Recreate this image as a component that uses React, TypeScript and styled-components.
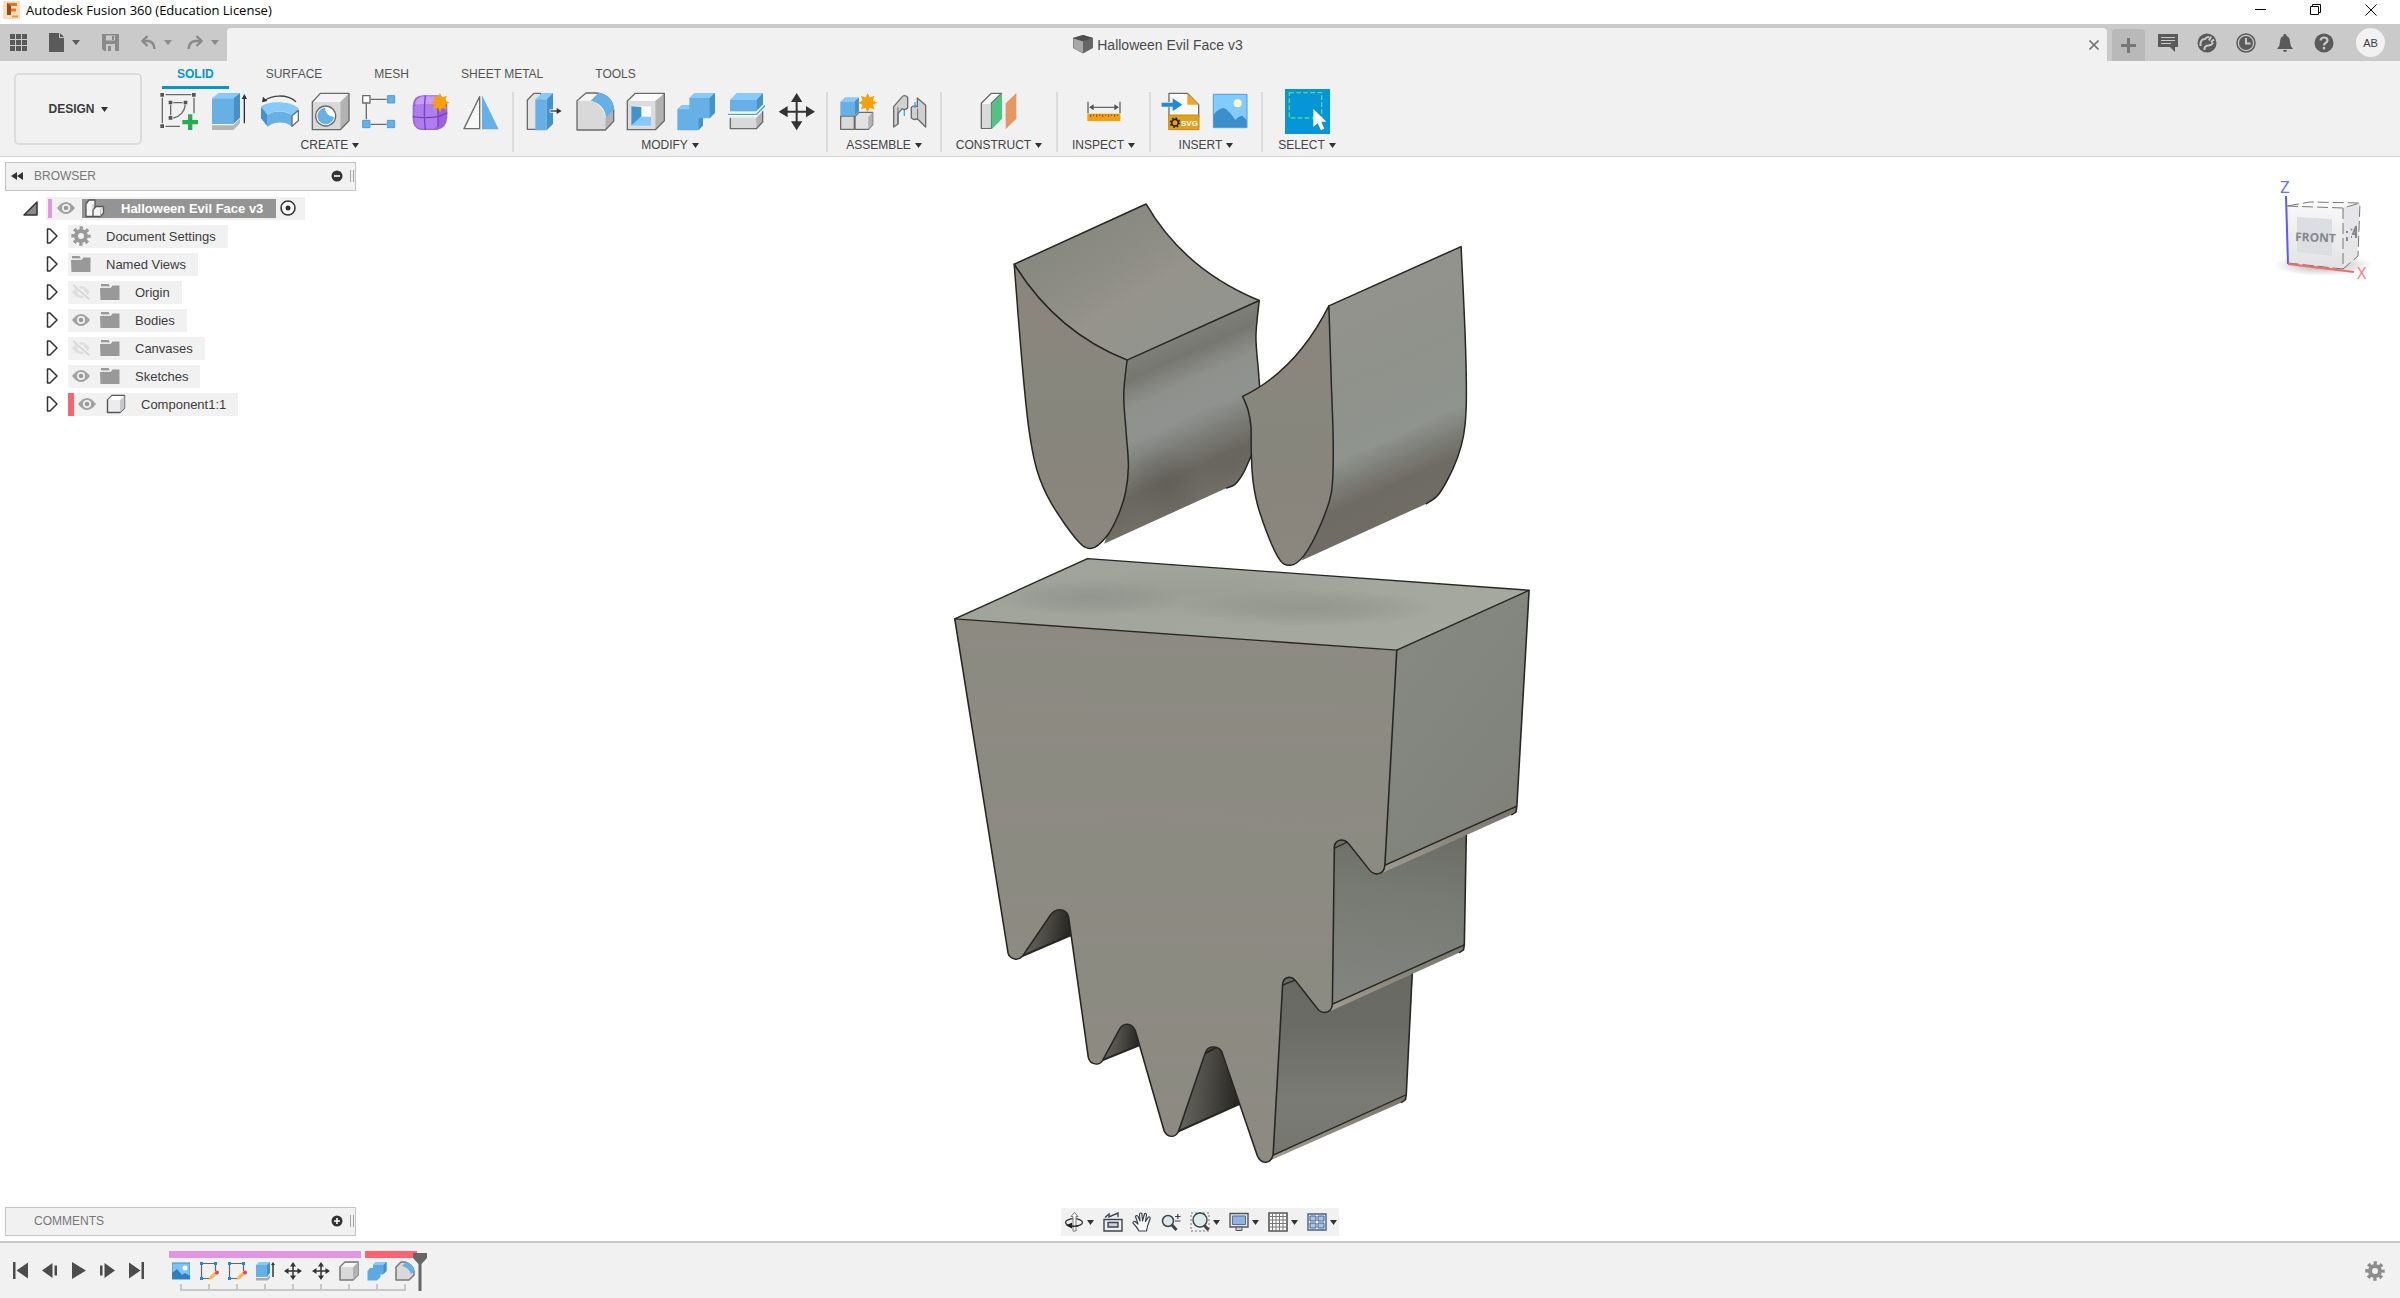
import React from 'react';
import styled, { createGlobalStyle } from 'styled-components';

const Global = createGlobalStyle`
  *, *::before, *::after { box-sizing: border-box; }
  html, body { margin: 0; padding: 0; background: #fff; }
  body, button { font-family: "Liberation Sans", Arial, Helvetica, sans-serif; font-size: 12px; color: #3c3c3c; }
  button { margin: 0; padding: 0; border: 0; background: none; cursor: pointer; }
  svg { display: block; flex: none; }
`;

const Shell = styled.div`
  display: flex;
  flex-direction: column;
  min-height: 100vh;
`;

/* ---------- title bar ---------- */
const TitleBar = styled.header`
  display: flex;
  align-items: center;
  height: 24px;
  padding: 0 2px 4px 3px;
  gap: 6px;
  background: #fff;
`;
const AppTitle = styled.h1`
  flex: 1;
  margin: 0;
  font: 400 13px/20px "Open Sans", "Noto Sans", sans-serif;
  color: #000;
`;
const WindowControls = styled.div`
  display: flex;
`;
const WindowButton = styled.button`
  display: grid;
  place-items: center;
  width: 55px;
  height: 20px;
`;

/* ---------- document strip ---------- */
const Strip = styled.div`
  display: flex;
  align-items: stretch;
  height: 37px;
  background: #cacaca;
`;
const QuickAccess = styled.div`
  display: flex;
  align-items: center;
  gap: 22px;
  padding: 0 8px 0 10px;
`;
const SplitButton = styled.button`
  display: flex;
  align-items: center;
  gap: 8px;
`;
const History = styled.div`
  display: flex;
  gap: 15px;
`;
const DocTab = styled.div`
  flex: 1;
  display: flex;
  align-items: center;
  margin-top: 4px;
  padding-right: 8px;
  border-radius: 4px 4px 0 0;
  background: #f1f1f1;
`;
const DocTitle = styled.div`
  flex: 1;
  display: flex;
  align-items: center;
  justify-content: center;
  gap: 4px;
  font-size: 14px;
  color: #4a4a4a;
`;
const NewTab = styled.button`
  display: grid;
  place-items: center;
  width: 33px;
  margin: 5px 13px 0 5px;
  border-radius: 4px 4px 0 0;
  background: #b9b9b9;
`;
const Utilities = styled.div`
  display: flex;
  align-items: center;
  gap: 19px;
  padding-right: 15px;
`;
const Avatar = styled.button`
  width: 29px;
  height: 29px;
  margin-left: 3px;
  border-radius: 50%;
  background: #f1f1f1;
  font-size: 11px;
`;

/* ---------- ribbon ---------- */
const Ribbon = styled.div`
  display: flex;
  height: 96px;
  background: #f1f1f1;
  border-bottom: 1px solid #d6d6d6;
`;
const Workspace = styled.button`
  display: flex;
  align-items: center;
  justify-content: center;
  gap: 6px;
  width: 128px;
  height: 72px;
  margin: 12px 6px 0 14px;
  border: 2px solid #dcdcdc;
  border-radius: 5px;
  font-weight: 700;
`;
const RibbonMain = styled.div`
  flex: 1;
`;
const Tabs = styled.nav`
  display: flex;
  gap: 22px;
  height: 28px;
  padding-left: 14px;
`;
const Tab = styled.button<{ $active?: boolean }>`
  padding: 0 15px;
  border-bottom: 3px solid ${(p) => (p.$active ? '#0696d7' : 'transparent')};
  color: ${(p) => (p.$active ? '#0696d7' : '#555')};
  font-weight: ${(p) => (p.$active ? 700 : 400)};
`;
const Groups = styled.div`
  display: flex;
`;
const Group = styled.section<{ $pad?: number; $width?: number }>`
  width: ${(p) => (p.$width ? `${p.$width}px` : 'auto')};
  padding: 0 ${(p) => p.$pad ?? 0}px;
`;
const Tools = styled.div`
  display: flex;
  justify-content: center;
`;
const Tool = styled.button`
  display: grid;
  place-items: center;
  width: 50px;
  height: 45px;
`;
const GroupLabel = styled.button`
  display: flex;
  align-items: center;
  justify-content: center;
  gap: 4px;
  width: 100%;
  height: 22px;
  color: #444;
`;
const Separator = styled.span`
  width: 2px;
  margin: 3px 0 4px;
  background: #dcdcdc;
`;

/* ---------- viewport ---------- */
const Viewport = styled.main`
  flex: 1;
  display: grid;
  grid-template-columns: 1fr auto 1fr;
  min-height: 0;
  background: #fff;
`;
const LeftColumn = styled.div`
  display: flex;
  flex-direction: column;
  justify-content: space-between;
  align-items: flex-start;
  padding: 5px 0 5px 5px;
`;
const Panel = styled.div`
  display: flex;
  align-items: center;
  width: 351px;
  height: 29px;
  padding: 0 1px 1px 5px;
  border: 1px solid #c4c4c4;
  background: #f1f1f1;
  color: #777;
`;
const PanelTitle = styled.h2`
  flex: 1;
  margin: 0 0 0 11px;
  font-size: 12px;
  font-weight: 400;
`;
const Grip = styled.span`
  width: 4px;
  height: 12px;
  margin-left: 7px;
  border: solid #a4a4a4;
  border-width: 0 1px;
`;
const Tree = styled.ul`
  margin: 3px 0 0;
  padding: 0;
  list-style: none;
`;
const Node = styled.li<{ $root?: boolean }>`
  display: flex;
  align-items: center;
  gap: ${(p) => (p.$root ? 8 : 9)}px;
  height: 28px;
  padding-left: ${(p) => (p.$root ? 18 : 41)}px;
`;
const Chip = styled.div<{ $bar?: boolean }>`
  display: flex;
  align-items: center;
  gap: 9px;
  height: 23px;
  padding: 0 12px 0 3px;
  border-left: ${(p) => (p.$bar ? '6px solid #ff6371' : '0')};
  background: #f1f1f1;
  font-size: 13px;
`;
const NodeName = styled.span`
  padding-left: 6px;
`;
const RootChip = styled.div`
  display: flex;
  align-items: center;
  gap: 4px;
  height: 23px;
  padding: 0 9px 0 2px;
  background: #f1f1f1;
`;
const RootBar = styled.span`
  width: 4px;
  height: 19px;
  background: #e394e3;
`;
const RootName = styled.button`
  display: flex;
  align-items: center;
  gap: 16px;
  height: 19px;
  margin-left: 2px;
  padding: 0 13px 0 3px;
  background: #949494;
  color: #fff;
  font-size: 13px;
  font-weight: 700;
`;
const Centre = styled.div`
  display: flex;
  flex-direction: column;
  align-items: center;
  padding-bottom: 5px;
`;
const Model = styled.svg`
  flex: 1 1 0;
  min-height: 0;
  width: 700px;
`;
const NavBar = styled.div`
  display: flex;
  align-items: center;
  gap: 9px;
  height: 28px;
  padding: 0 2px 0 3px;
  background: #f1f1f1;
`;
const NavButton = styled.button`
  display: flex;
  align-items: center;
  gap: 3px;
`;
const RightColumn = styled.div`
  display: flex;
  justify-content: flex-end;
  padding: 19px 26px 0 0;
`;

/* ---------- timeline ---------- */
const TimelineBar = styled.footer`
  display: flex;
  align-items: flex-start;
  height: 57px;
  border-top: 2px solid #c8c8c8;
  background: #f1f1f1;
`;
const Playback = styled.div`
  display: flex;
  align-self: center;
  padding: 0 16px 0 6px;
`;
const PlayButton = styled.button`
  display: grid;
  place-items: center;
  width: 29px;
  height: 28px;
`;
const Track = styled.div`
  position: relative;
  display: grid;
  grid-template-columns: repeat(9, 28px);
  row-gap: 3px;
  padding-top: 8px;
`;
const Span = styled.span<{ $cols: number; $color: string }>`
  grid-column: span ${(p) => p.$cols};
  height: 7px;
  margin: 0 2px;
  background: ${(p) => p.$color};
`;
const Step = styled.button`
  display: grid;
  place-items: center;
  height: 20px;
`;
const Rail = styled.div`
  grid-column: 1 / -1;
  display: flex;
  margin: 0 13px;
  border-right: 2px solid #c8c8c8;
`;
const RailSegment = styled.span`
  width: 28px;
  height: 7px;
  border: solid #c8c8c8;
  border-width: 0 0 2px 2px;
`;
const Marker = styled.svg`
  position: absolute;
  right: -8px;
  top: 10px;
`;
const SettingsButton = styled.button`
  margin: 0 15px 0 auto;
  align-self: center;
`;

/* ---------- icons ---------- */
const Caret = ({ color = '#333', w = 7 }: { color?: string; w?: number }) => (
  <svg width={w} height="5" viewBox="0 0 7 5" preserveAspectRatio="none"><path d="M0 0h7L3.5 5z" fill={color} /></svg>
);

type Art = { box: string; w?: number; h?: number; children: React.ReactNode };
const Ico = ({ box, w = 40, h = 39, children }: Art) => (
  <svg width={w} height={h} viewBox={box} strokeLinejoin="round" aria-hidden="true">{children}</svg>
);

const G = '#6b6b6b';
const star = (cx: number, cy: number, r: number, inner = 0.58) =>
  Array.from({ length: 16 }, (_, i) => {
    const a = (i * Math.PI) / 8 - Math.PI / 2;
    const k = i % 2 ? r * inner : r;
    return `${(cx + Math.cos(a) * k).toFixed(1)},${(cy + Math.sin(a) * k).toFixed(1)}`;
  }).join(' ');

const createTools: [string, React.ReactNode][] = [
  ['Create Sketch', <Ico box="480 276 120 117">
    <path d="M497 284H574M487 293V370M582 293V340M496 379H540" stroke={G} strokeWidth="4" fill="none" />
    <path d="M512 314V346M520 308H548M556 314C554 334 540 350 520 354" stroke={G} strokeWidth="4" fill="none" />
    <path d="M481 279h11v11h-11zM576 279h11v11h-11zM481 373h11v11h-11zM506 302h11v11h-11zM551 302h11v11h-11zM506 348h11v11h-11z" fill="#555" />
    <path d="M564 343h13v17h17v13h-17v17h-13v-17h-17v-13h17z" fill="#25ae50" />
  </Ico>],
  ['Extrude', <Ico box="630 276 120 117">
    <path d="M636 376h64l20-20v14l-20 20h-64z" fill="#b4b4b4" />
    <path d="M636 295L656 279H720L700 295z" fill="#86c9fa" />
    <path d="M636 295H700V372H636z" fill="#67b0e6" />
    <path d="M700 295L720 279V353L700 372z" fill="#4492cb" />
    <path d="M733 370V290" stroke="#333" strokeWidth="4" /><path d="M725 297L733 282L741 297z" fill="#333" />
  </Ico>],
  ['Revolve', <Ico box="780 276 120 117">
    <path d="M793 302C815 285 860 281 888 305" stroke="#444" strokeWidth="4" fill="none" />
    <path d="M786 307L789 290L802 303z" fill="#333" />
    <path d="M783 320C800 302 872 300 897 326L876 347C860 330 820 330 803 345z" fill="#86c9fa" />
    <path d="M783 320L803 345V380L783 355z" fill="#4492cb" />
    <path d="M803 345C822 331 858 331 876 347V380C860 363 822 363 803 380z" fill="#67b0e6" />
    <path d="M876 347L895 331V362L876 379z" fill="#fff" stroke={G} strokeWidth="4" />
  </Ico>],
  ['Hole', <Ico box="930 276 120 117">
    <path d="M937 306L961 280H1047L1021 306z" fill="#f4f4f4" />
    <path d="M937 306H1021V389H937z" fill="#d9d9d9" />
    <path d="M1021 306L1047 280V362L1021 389z" fill="#b2b2b2" />
    <path d="M937 306L961 280H1047V362L1021 389H937z" fill="none" stroke={G} strokeWidth="4" />
    <circle cx="977" cy="348" r="30" fill="#fff" stroke={G} strokeWidth="4" />
    <path d="M975 323A25 25 0 1 0 1002 351A28 28 0 0 1 975 323z" fill="#67b0e6" />
  </Ico>],
  ['Rectangular Pattern', <Ico box="1080 276 120 117">
    <path d="M1112 298H1160M1099 310V358M1112 373H1160" stroke={G} strokeWidth="4" />
    <path d="M1088 287h22v22h-22z" fill="#fff" stroke={G} strokeWidth="4" />
    <path d="M1162 287h22v22h-22zM1162 361h22v22h-22zM1088 361h22v22h-22z" fill="#67b0e6" stroke="#4f9fd8" strokeWidth="3" />
  </Ico>],
  ['Create Form', <Ico box="1230 276 120 117">
    <path d="M1238 318Q1240 286 1270 286H1315Q1342 295 1342 320V352Q1340 384 1312 390H1262Q1238 384 1238 356z" fill="#9a63d8" />
    <path d="M1246 306Q1254 289 1272 289H1326L1308 314H1246z" fill="#c79bff" />
    <path d="M1243 320Q1250 312 1262 312H1302Q1314 314 1314 326V370Q1312 385 1298 386H1264Q1243 382 1243 356z" fill="#ae7eec" />
    <path d="M1276 286Q1270 340 1276 390M1238 350Q1275 356 1315 350L1342 338M1314 320V380" stroke="#7c3fc0" strokeWidth="4" fill="none" />
    <polygon points={star(1320, 308, 29)} fill="#f9a006" />
  </Ico>],
  ['Mirror', <Ico box="1380 276 120 117">
    <path d="M1439 290V386H1392z" fill="#f7f7f7" stroke={G} strokeWidth="4" />
    <path d="M1446 286L1496 388H1446z" fill="#67b0e6" />
  </Ico>],
];

const modifyTools: [string, React.ReactNode][] = [
  ['Press Pull', <Ico box="75 126 120 117">
    <path d="M82 150L102 130H122V238H82z" fill="#e4e4e4" stroke={G} strokeWidth="4" />
    <path d="M106 148L126 129H159L140 148z" fill="#86c9fa" /><path d="M106 148H140V241H106z" fill="#67b0e6" />
    <path d="M140 148L159 129V222L140 241z" fill="#4492cb" />
    <path d="M149 178h20v10h-20z" fill="#f8f8f8" /><path d="M151 183H172" stroke="#333" strokeWidth="4" /><path d="M170 174L185 183L170 192z" fill="#333" />
  </Ico>],
  ['Fillet', <Ico box="225 126 120 117">
    <path d="M231 152L258 129H290L270 152z" fill="#f6f6f6" />
    <path d="M231 152H262Q306 156 316 203V240H231z" fill="#d9d9d9" /><path d="M316 205L341 178V214L316 240z" fill="#b2b2b2" />
    <path d="M231 152L258 129H290Q336 136 341 180V214L316 240H231z" fill="none" stroke={G} strokeWidth="4" />
    <path d="M272 152L296 128Q338 136 343 178L318 203Q314 162 272 152z" fill="#67b0e6" />
  </Ico>],
  ['Shell', <Ico box="375 126 120 117">
    <path d="M382 153L406 130H493L466 153z" fill="#fafafa" /><path d="M382 153H466V239H382z" fill="#dcdcdc" />
    <path d="M466 153L493 130V212L466 239z" fill="#b2b2b2" />
    <path d="M382 153L406 130H493V212L466 239H382z" fill="none" stroke={G} strokeWidth="4" />
    <path d="M394 169H453V227H394z" fill="#fafafa" /><path d="M394 169L424 171V200L394 227z" fill="#4492cb" />
    <path d="M394 227L422 200H453V227z" fill="#86c9fa" />
  </Ico>],
  ['Combine', <Ico box="525 126 120 117">
    <path d="M532 178L546 165H568V144L584 129H645V188L629 205H609V226L594 241H532z" fill="#67b0e6" />
    <path d="M568 144L584 129H645L629 144zM532 178L546 165H568V178z" fill="#86c9fa" />
    <path d="M629 144L645 129V188L629 205zM609 205H596V241L609 226z" fill="#4492cb" />
  </Ico>],
  ['Split Body', <Ico box="675 126 120 117">
    <path d="M690 150L710 129H789L769 150z" fill="#86c9fa" /><path d="M690 150H769V184H690z" fill="#67b0e6" /><path d="M769 150L789 129V163L769 184z" fill="#4492cb" />
    <path d="M691 203H769V236H691z" fill="#d9d9d9" /><path d="M769 203L788 184V216L769 236z" fill="#b2b2b2" />
    <path d="M691 203V236H769L788 216V184" stroke={G} strokeWidth="4" fill="none" />
    <path d="M684 193H770L796 166" stroke="#fff" strokeWidth="9" fill="none" /><path d="M684 193H770L796 166" stroke="#3fa3ea" strokeWidth="4" fill="none" />
  </Ico>],
  ['Move', <Ico box="825 126 120 117">
    <path d="M858 185H922M890 152V218" stroke="#333" strokeWidth="6" />
    <path d="M836 185l27-17v34zM945 185l-27-17v34zM890 129l17 27h-34zM890 241l17-27h-34z" fill="#333" />
  </Ico>],
];

const assembleTools: [string, React.ReactNode][] = [
  ['New Component', <Ico box="1020 126 120 117">
    <path d="M1025 198H1066V238H1025z" fill="#d9d9d9" stroke={G} strokeWidth="4" />
    <path d="M1068 200L1080 187H1121V224L1108 238H1068z" fill="#e2e2e2" stroke={G} strokeWidth="4" /><path d="M1108 200L1121 187V224L1108 238z" fill="#b2b2b2" />
    <path d="M1024 155L1038 142H1080L1066 155z" fill="#86c9fa" /><path d="M1024 155H1066V197H1024z" fill="#67b0e6" /><path d="M1066 155L1080 142V184L1066 197z" fill="#4492cb" />
    <polygon points={star(1106, 158, 29)} fill="#f9a006" />
  </Ico>],
  ['Joint', <Ico box="1170 126 120 117">
    <path d="M1184 170L1208 142Q1216 132 1226 142V174Q1218 182 1210 176L1197 190V222L1184 231z" fill="#d0d0d0" stroke={G} strokeWidth="4" />
    <path d="M1280 166L1255 144V170Q1244 164 1237 172V204Q1246 212 1255 206L1280 231z" fill="#d0d0d0" stroke={G} strokeWidth="4" />
    <path d="M1216 180V198M1248 156V174" stroke="#3fa3ea" strokeWidth="4" /><path d="M1197 172V222M1256 176V206" stroke={G} strokeWidth="3" />
  </Ico>],
];

const constructTools: [string, React.ReactNode][] = [
  ['Offset Plane', <Ico box="180 216 120 117">
    <path d="M187 250L217 220H248L217 250V325H187z" fill="#fafafa" stroke={G} strokeWidth="4" /><path d="M189 252H214V323H189z" fill="#d9d9d9" />
    <path d="M218 252L249 220V296L218 328z" fill="#53c184" /><path d="M260 250L292 219V296L260 328z" fill="#e59866" />
  </Ico>],
];
const inspectTools: [string, React.ReactNode][] = [
  ['Measure', <Ico box="492 216 120 117">
    <path d="M504 245V280M600 245V280M512 262H592" stroke="#666" strokeWidth="4" /><path d="M507 262l14-9v18zM597 262l-14-9v18z" fill="#555" />
    <path d="M502 281H601V303H502z" fill="#f9a006" /><path d="M512 283v8M521 283v5M530 283v8M539 283v5M548 283v8M557 283v5M566 283v8M575 283v5M584 283v8M593 283v5" stroke="#7a5200" strokeWidth="3" />
  </Ico>],
];
const insertTools: [string, React.ReactNode][] = [
  ['Insert SVG', <Ico box="729 216 120 117">
    <path d="M753 246V220H808L842 254V290H753V262" fill="#fbfbfb" stroke={G} strokeWidth="4" />
    <path d="M808 220V254H843z" fill="#f3a623" />
    <path d="M731 248h33v-13l29 19l-29 19v-13h-33z" fill="#1d8ae0" />
    <path d="M752 285H843V329H752z" fill="#e2a11d" stroke="#c98a10" strokeWidth="3" />
    <circle cx="771" cy="308" r="10" fill="none" stroke="#222" strokeWidth="5" /><circle cx="771" cy="308" r="14" fill="none" stroke="#222" strokeWidth="4" strokeDasharray="5 6" />
    <text x="789" y="317" fontSize="24" fontWeight="700" fontFamily="Liberation Sans, sans-serif" fill="#fff">SVG</text>
  </Ico>],
  ['Canvas', <Ico box="879 216 120 117">
    <path d="M886 223H987V323H886z" fill="#82cbff" stroke="#4f9fd8" strokeWidth="3" /><circle cx="959" cy="250" r="12" fill="#fdf9c8" />
    <path d="M887 284Q902 264 918 264Q932 270 952 300Q964 286 974 288L986 300V322H887z" fill="#3d8fcb" />
  </Ico>],
];
const selectTools: [string, React.ReactNode][] = [
  ['Select', <Ico box="1095 208 135 135" w={45} h={45}>
    <path d="M1095 208H1230V343H1095z" fill="#0696d7" />
    <path d="M1108 219H1205V295H1108z" fill="none" stroke="#52d89a" strokeWidth="4" strokeDasharray="14 7" />
    <path d="M1180 268V322L1193 311L1203 332L1213 327L1204 306H1219z" fill="#fff" />
  </Ico>],
];

const groups: { name: string; tools: [string, React.ReactNode][]; pad?: number; width?: number }[] = [
  { name: 'CREATE', tools: createTools, pad: 7 },
  { name: 'MODIFY', tools: modifyTools, pad: 6 },
  { name: 'ASSEMBLE', tools: assembleTools, pad: 6 },
  { name: 'CONSTRUCT', tools: constructTools, width: 114 },
  { name: 'INSPECT', tools: inspectTools, width: 91 },
  { name: 'INSERT', tools: insertTools, pad: 5 },
  { name: 'SELECT', tools: selectTools, width: 88 },
];

const Gear = ({ color, size = 20 }: { color: string; size?: number }) => (
  <svg width={size} height={size} viewBox="0 0 20 20" fill="none" stroke={color}>
    <circle cx="10" cy="10" r="5" strokeWidth="4" />
    <circle cx="10" cy="10" r="8" strokeWidth="3.4" strokeDasharray="3.3 2.98" strokeDashoffset="1.65" />
  </svg>
);
const Eye = () => (
  <svg width="20" height="14" viewBox="0 0 20 14"><path d="M1 7Q10-5 19 7Q10 19 1 7z" fill="#a2a2a2" /><circle cx="10" cy="7" r="4" fill="#f1f1f1" /><circle cx="10" cy="7" r="2.3" fill="#999" /></svg>
);
const EyeOff = () => (
  <svg width="20" height="16" viewBox="0 0 20 16"><path d="M1 8Q10-4 19 8Q10 20 1 8z" fill="#dedede" /><circle cx="10" cy="8" r="3.5" fill="#f1f1f1" /><path d="M3 1L18 15" stroke="#f1f1f1" strokeWidth="4" /><path d="M2 1L18 15" stroke="#d8d8d8" strokeWidth="2" /></svg>
);
const Folder = () => (
  <svg width="20" height="16" viewBox="0 0 20 16"><path d="M0 4H10.500L12.500 1.500H19.500V16H0.500zM1 0H8.500L10 2.500H1z" fill="#999" /><path d="M1 3.200H10" stroke="#e4e4e4" /></svg>
);
const ComponentIcon = () => (
  <svg width="20" height="20" viewBox="0 0 20 20"><path d="M1.500 6L6 1.500H18.500V14L14 18.500H1.500z" fill="#ececef" stroke="#555" strokeWidth="1.400" strokeLinejoin="round" /><path d="M14 6L18.500 1.500V14L14 18.500z" fill="#c9c9cd" /><path d="M2 6L6 2H18L14 6z" fill="#fff" /></svg>
);
const AssemblyIcon = () => (
  <svg width="20" height="19" viewBox="0 0 20 19" stroke="#555" strokeWidth="1.300" strokeLinejoin="round"><path d="M1 5L4 1H10V14L8 17.500H1z" fill="#f6f6f6" /><path d="M8 11L11 7.500H18.500V14L15.500 17.500H8z" fill="#f6f6f6" /><path d="M8 5V11M15.500 11L18.500 7.500M15.500 11V17.500" stroke="#aaa" strokeWidth=".8" /></svg>
);
const Closed = () => (
  <svg width="13" height="16" viewBox="0 0 13 16"><path d="M1.500 1L4 1L11 8L4 15H1.500z" fill="#fff" stroke="#333" strokeWidth="1.500" strokeLinejoin="round" /></svg>
);

const nodes: { name: string; eye?: 'on' | 'off'; icon: 'gear' | 'folder' | 'component' }[] = [
  { name: 'Document Settings', icon: 'gear' },
  { name: 'Named Views', icon: 'folder' },
  { name: 'Origin', eye: 'off', icon: 'folder' },
  { name: 'Bodies', eye: 'on', icon: 'folder' },
  { name: 'Canvases', eye: 'off', icon: 'folder' },
  { name: 'Sketches', eye: 'on', icon: 'folder' },
  { name: 'Component1:1', eye: 'on', icon: 'component' },
];

/* ---------- model ---------- */
type P = [number, number];
// Smooth curve through a list of points.
const seg = (pts: P[]) => {
  let d = '';
  for (let i = 0; i < pts.length - 1; i++) {
    const a = pts[i - 1] ?? pts[i];
    const b = pts[i];
    const c = pts[i + 1];
    const e = pts[i + 2] ?? c;
    d += `C${b[0] + (c[0] - a[0]) / 6} ${b[1] + (c[1] - a[1]) / 6} ${c[0] - (e[0] - b[0]) / 6} ${c[1] - (e[1] - b[1]) / 6} ${c[0]} ${c[1]}`;
  }
  return d;
};
const rev = (p: P[]) => [...p].reverse();
const M = (p: P) => `M${p[0]} ${p[1]}`;
const L = (p: P) => `L${p[0]} ${p[1]}`;

const lRight: P[] = [[441, 541], [431, 645], [438, 755], [445, 860], [436, 940], [413, 1010], [380, 1070], [335, 1106]];
const lOuter: P[] = [...lRight, [290, 1080], [212, 968], [170, 870], [145, 740], [124, 530], [102, 253]];
const lBack: P[] = [[838, 362], [828, 470], [836, 580], [840, 660], [830, 790], [813, 830], [790, 880], [765, 914], [740, 925]];
const rRight: P[] = [[1047, 378], [1054, 600], [1060, 790], [1055, 935], [1020, 1040], [972, 1128], [931, 1157]];
const rOuter: P[] = [...rRight, [893, 1130], [840, 1000], [820, 910], [814, 820], [813, 740], [804, 690], [788, 650]];
const rBack: P[] = [[1444, 200], [1456, 460], [1460, 640], [1456, 735], [1444, 800], [1420, 866], [1378, 942], [1340, 972]];
const leftSide = `${M(lRight[0])}${L(lBack[0])}${seg(lBack)}L372 1092${L(lRight[6])}${seg(rev(lRight.slice(0, 7)))}z`;

const face =
  'M62 238L1181 332L1151 975Q1150 1003 1131 1004Q1119 1003 1112 992L1060 914Q1052 902 1040 902Q1025 904 1023 922L1018 1395Q1016 1419 998 1420Q986 1419 980 1408L925 1325Q918 1314 908 1314Q893 1316 892 1336L868 1846Q864 1869 848 1870Q834 1868 828 1850L738 1538Q732 1523 715 1523Q700 1524 696 1542L629 1775Q623 1792 610 1792Q597 1790 592 1775L519 1474Q513 1456 498 1455Q487 1456 480 1468L438 1560Q432 1575 420 1575Q403 1573 400 1554L350 1132Q346 1111 327 1111Q314 1112 305 1126L234 1250Q227 1260 216 1260Q200 1257 197 1242z';

const bandA = '#8d8a82';
const bandB = '#8b8b82';

const ModelView = () => (
  <Model viewBox="850 157 700 1052" role="img" aria-label="Halloween Evil Face model">
    <defs>
      <linearGradient id="eyeFace" x1="0" y1="0" x2="0" y2="1">
        <stop offset="0" stopColor="#8a867e" /><stop offset=".3" stopColor="#8a867e" /><stop offset=".38" stopColor="#87877e" /><stop offset=".6" stopColor="#86867d" /><stop offset=".68" stopColor="#89857d" /><stop offset="1" stopColor="#8b877f" />
      </linearGradient>
      <linearGradient id="eyeTop" gradientUnits="userSpaceOnUse" x1="250" y1="120" x2="480" y2="500">
        <stop offset="0" stopColor="#85877f" /><stop offset=".3" stopColor="#8b8b83" /><stop offset=".7" stopColor="#95938b" /><stop offset="1" stopColor="#92948d" />
      </linearGradient>
      <linearGradient id="eyeSideL" gradientUnits="userSpaceOnUse" x1="441" y1="541" x2="636" y2="973">
        <stop offset="0" stopColor="#7e7f79" /><stop offset=".12" stopColor="#777771" /><stop offset=".28" stopColor="#8e908b" /><stop offset=".48" stopColor="#8f938f" /><stop offset=".62" stopColor="#7e7f7a" /><stop offset=".8" stopColor="#6a6760" /><stop offset="1" stopColor="#716e66" />
      </linearGradient>
      <linearGradient id="eyeSideR" gradientUnits="userSpaceOnUse" x1="1047" y1="378" x2="1320" y2="981">
        <stop offset="0" stopColor="#92938c" /><stop offset=".35" stopColor="#8f928b" /><stop offset=".66" stopColor="#8f948e" /><stop offset=".76" stopColor="#7d7e78" /><stop offset=".86" stopColor="#6e6b64" /><stop offset="1" stopColor="#706c64" />
      </linearGradient>
      <linearGradient id="mouthFace" gradientUnits="userSpaceOnUse" x1="600" y1="238" x2="570" y2="1870">
        <stop offset="0" stopColor={bandA} /><stop offset=".04" stopColor={bandA} /><stop offset=".09" stopColor={bandB} /><stop offset=".14" stopColor={bandB} /><stop offset=".17" stopColor={bandA} /><stop offset=".21" stopColor={bandA} /><stop offset=".25" stopColor={bandB} /><stop offset=".33" stopColor={bandB} /><stop offset=".37" stopColor={bandA} /><stop offset=".4" stopColor={bandB} /><stop offset=".5" stopColor={bandB} /><stop offset=".53" stopColor={bandA} /><stop offset=".58" stopColor={bandA} /><stop offset=".62" stopColor={bandB} /><stop offset=".71" stopColor={bandB} /><stop offset=".75" stopColor={bandA} /><stop offset=".8" stopColor={bandA} /><stop offset=".85" stopColor={bandB} /><stop offset=".9" stopColor={bandA} /><stop offset="1" stopColor={bandA} />
      </linearGradient>
      <linearGradient id="mouthTop" x1="0" y1="0" x2="1" y2=".6">
        <stop offset="0" stopColor="#9ea29a" /><stop offset="1" stopColor="#a6a99f" />
      </linearGradient>
      <radialGradient id="smudge"><stop offset="0" stopColor="#8d9189" stopOpacity=".75" /><stop offset=".5" stopColor="#8f938b" stopOpacity=".5" /><stop offset="1" stopColor="#8f938b" stopOpacity="0" /></radialGradient>
      <radialGradient id="shade"><stop offset="0" stopColor="#55544e" stopOpacity=".4" /><stop offset="1" stopColor="#55544e" stopOpacity="0" /></radialGradient>
      <linearGradient id="side1" x1="0" y1="0" x2=".7" y2="1"><stop offset="0" stopColor="#888a83" /><stop offset=".5" stopColor="#83867f" /><stop offset="1" stopColor="#7f8179" /></linearGradient>
      <linearGradient id="side2" x1=".5" y1="0" x2=".4" y2="1"><stop offset="0" stopColor="#6b6c66" /><stop offset=".35" stopColor="#777a73" /><stop offset="1" stopColor="#838680" /></linearGradient>
      <linearGradient id="side3" x1=".5" y1="0" x2=".5" y2="1"><stop offset="0" stopColor="#686963" /><stop offset=".3" stopColor="#6b6b66" /><stop offset=".7" stopColor="#797b74" /><stop offset="1" stopColor="#76766f" /></linearGradient>
      <linearGradient id="hollow" x1="0" y1=".6" x2="1" y2=".7"><stop offset="0" stopColor="#6a6861" /><stop offset=".5" stopColor="#4b4944" /><stop offset="1" stopColor="#24231f" /></linearGradient>
      <linearGradient id="lip" x1="0" y1="0" x2="0" y2="1"><stop offset="0" stopColor="#77746b" /><stop offset="1" stopColor="#a09c92" /></linearGradient>
      <clipPath id="topClip"><path d="M62 238L398 57L1516 152L1181 332z" /></clipPath>
      <clipPath id="sideClip"><path d={leftSide} /></clipPath>
    </defs>

    {/* eyes */}
    <g transform="translate(980 180) scale(.33333)" stroke="#262622" strokeWidth="4.500" strokeLinejoin="round" strokeLinecap="round" fill="none">
      <path stroke="none" fill="url(#eyeSideL)" d={leftSide} />
      <g clipPath="url(#sideClip)" stroke="none" fill="url(#shade)">
        <ellipse cx="560" cy="920" rx="110" ry="120" />
        <ellipse cx="760" cy="850" rx="120" ry="60" transform="rotate(-25 760 850)" opacity=".5" />
      </g>
      <path d={`${M(lBack[0])}${seg(lBack)}`} />
      <path fill="url(#eyeTop)" d="M102 253L498 72Q612 269 838 362L441 541Q228 457 102 253z" />
      <path fill="url(#eyeFace)" d={`M102 253Q228 457 441 541${seg(lOuter)}z`} />
      <path stroke="none" fill="url(#eyeSideR)" d={`${M(rRight[0])}${L(rBack[0])}${seg(rBack)}L965 1143${L(rRight[5])}${seg(rev(rRight.slice(0, 6)))}z`} />
      <path d={`${M(rRight[0])}${L(rBack[0])}${seg(rBack)}`} />
      <path fill="url(#eyeFace)" d={`M788 650Q948 573 1047 378${seg(rOuter)}z`} />
    </g>

    {/* mouth */}
    <g transform="translate(930 540) scale(.3954 .33333)" stroke="#262622" strokeWidth="4" strokeLinejoin="round" strokeLinecap="round" fill="none">
      <g stroke="none">
        <path fill="url(#side3)" d="M893 1300H925L998 1400L1222 1290L1205 1667L868 1848z" />
        <path fill="url(#lip)" d="M868 1848L1205 1667L1203 1682L1193 1690L862 1864z" />
        <path fill="url(#side2)" d="M1024 890H1060L1130 990L1357 875L1352 1217L1018 1395z" />
        <path fill="url(#lip)" d="M1018 1395L1352 1217L1350 1232L1340 1240L1012 1416z" />
        <path fill="url(#side1)" d="M1181 332L1516 152L1485 800L1150 980z" />
        <path fill="url(#lip)" d="M1150 978L1485 800L1483 818L1472 826L1145 1000z" />
        <path fill="url(#hollow)" d="M232 1250L290 1100H350L355 1188z" />
        <path fill="url(#hollow)" d="M436 1562L480 1440H518L530 1518z" />
        <path fill="url(#hollow)" d="M626 1777L690 1510H738L782 1695z" />
        <path fill="url(#mouthTop)" d="M62 238L398 57L1516 152L1181 332z" />
        <g clipPath="url(#topClip)" fill="url(#smudge)">
          <ellipse cx="400" cy="175" rx="240" ry="54" />
          <ellipse cx="960" cy="205" rx="330" ry="56" />
          <ellipse cx="680" cy="160" rx="440" ry="75" opacity=".5" />
        </g>
      </g>
      <path d="M62 238L398 57L1516 152L1181 332M1516 152L1485 800L1483 818L1472 826M1150 978L1485 800" />
      <path d="M1357 888L1352 1217L1350 1232L1340 1240M1018 1395L1352 1217M1024 926L1056 908" />
      <path d="M1220 1305L1205 1667L1203 1682L1193 1690M868 1848L1205 1667M892 1338L925 1322" />
      <path d="M234 1250L355 1188M438 1562L530 1518M628 1777L782 1695M697 1542L722 1526" strokeWidth="6" />
      <path d={face} fill="url(#mouthFace)" />
    </g>
  </Model>
);

const ViewCube = () => (
  <svg width="104" height="110" viewBox="2270 176 104 110" role="img" aria-label="View cube">
    <defs>
      <radialGradient id="cubeShadow"><stop offset="0" stopColor="#777" stopOpacity=".7" /><stop offset="1" stopColor="#999" stopOpacity="0" /></radialGradient>
      <linearGradient id="cubeFront" x1="0" y1="0" x2="0" y2="1"><stop offset="0" stopColor="#f7f7f7" /><stop offset="1" stopColor="#e2e2e4" /></linearGradient>
    </defs>
    <ellipse cx="2323" cy="265" rx="50" ry="11" fill="url(#cubeShadow)" />
    <path d="M2287 206L2310 202L2360 203L2343 208z" fill="#fbfbfb" />
    <path d="M2287 206L2343 208V269L2288 263z" fill="url(#cubeFront)" />
    <path d="M2343 208L2360 203L2358 256L2343 269z" fill="#e6e6e8" />
    <path d="M2297 217L2332 219V256L2297 252z" fill="#dcdee2" />
    <path d="M2287 206L2343 208L2360 203L2310 202L2287 206M2343 208V269L2358 256L2360 203M2288 263L2343 269" fill="none" stroke="#777" strokeDasharray="11 4" />
    <path d="M2286 196L2288 264" stroke="#5a5af5" strokeWidth="2" />
    <path d="M2288 264L2354 272" stroke="#f06a6a" strokeWidth="2" />
    <path d="M2347 241v-4M2347 233v-2M2351 237h1M2351 230l1-1M2356 238V226l-3 8h3" stroke="#84878d" strokeWidth="2" fill="none" />
    <text x="2295" y="241" fontSize="12" fontWeight="700" fontFamily="Open Sans, sans-serif" fill="#84878d" transform="rotate(2 2295 241)">FRONT</text>
    <text x="2280" y="193" fontSize="17" fontFamily="Noto Sans, sans-serif" fill="#6b6bff">Z</text>
    <text x="2357" y="279" fontSize="16" fontFamily="Noto Sans, sans-serif" fill="#ff7d7d">X</text>
  </svg>
);

const Pencil = () => (
  <svg width="20" height="20" viewBox="0 0 20 20"><path d="M3 2.500H16M2.500 4V16M16.500 4V10M4 17.500H11" stroke="#666" strokeWidth="1.200" /><path d="M1 1h3v3H1zM15 1h3v3h-3zM1 16h3v3H1z" fill="#1d8ae0" /><path d="M9.500 19L11 15L16 10.500L18.500 13L13 18z" fill="#fcb75a" /><circle cx="18" cy="11.500" r="2" fill="#f0405a" /></svg>
);
const MoveSmall = () => (
  <svg width="18" height="18" viewBox="0 0 18 18" fill="#333"><path d="M4 9H14M9 4V14" stroke="#333" strokeWidth="1.500" /><path d="M0 9l4.500-3v6zM18 9l-4.500-3v6zM9 0l3 4.500H6zM9 18l3-4.500H6z" /></svg>
);
const steps: [string, React.ReactNode][] = [
  ['Canvas', <svg width="18" height="18" viewBox="0 0 18 18"><path d="M0 1h18v16H0z" fill="#7cc4f8" stroke="#3d8fcb" /><circle cx="13" cy="6" r="2.500" fill="#fdf9c8" /><path d="M0 11L5 7L10 13L13 11L18 14V17H0z" fill="#2f7fc0" /></svg>],
  ['Sketch 1', <Pencil />],
  ['Sketch 2', <Pencil />],
  ['Extrude', <svg width="20" height="20" viewBox="0 0 20 20"><path d="M1 17h11l3-3v3l-2.500 2.500H1z" fill="#aaa" /><path d="M1 4L4 1H15L12 4z" fill="#86c9fa" /><path d="M1 4H12V16H1z" fill="#67b0e6" /><path d="M12 4L15 1V12L12 16z" fill="#4492cb" /><path d="M18 3V16" stroke="#333" strokeWidth="1.500" /><path d="M16 4L18 1L20 4z" fill="#333" /></svg>],
  ['Move 1', <MoveSmall />],
  ['Move 2', <MoveSmall />],
  ['Component', <svg width="20" height="20" viewBox="0 0 20 20"><path d="M1 6L6 1H19V14L14 19H1z" fill="#d9d9d9" stroke="#777" strokeWidth="1.500" strokeLinejoin="round" /><path d="M14 6L19 1V14L14 19z" fill="#b2b2b2" /><path d="M2 6L6 2H18L14 6z" fill="#f6f6f6" /></svg>],
  ['Combine', <svg width="20" height="20" viewBox="0 0 20 20"><path d="M0.500 10L3 7H6V4L9 1H19.500V10L16 13.500H13.500V16L10 19.500H0.500z" fill="#5fa9e2" /><path d="M6 4L9 1H19.500L16.500 4z" fill="#86c9fa" /><path d="M16.500 4L19.500 1V10L16.500 13z" fill="#4492cb" /></svg>],
  ['Fillet', <svg width="20" height="20" viewBox="0 0 20 20"><path d="M1 6L6 1H10Q17 3 19 10V14L14 19H1z" fill="#d9d9d9" stroke="#777" strokeWidth="1.500" strokeLinejoin="round" /><path d="M7 5L11 1Q18 3 19.500 10L16 13Q14 7 7 5z" fill="#67b0e6" /></svg>],
];

const playback: [string, React.ReactNode][] = [
  ['Go to start', <path d="M0 1h2.500v17H0zM3.500 9.500L15 1.500v16z" />],
  ['Step back', <path d="M0 9.500L10.500 2v15zM12.500 4.500h2.500v10h-2.500z" />],
  ['Play', <path d="M1 1L15 9.500L1 18z" />],
  ['Step forward', <path d="M15 9.500L4.500 2v15zM0 4.500h2.500v10H0z" />],
  ['Go to end', <path d="M15 1h-2.500v17H15zM11.500 9.500L0 1.500v16z" />],
];

const D = '#3c4450';
const navItems: [string, React.ReactNode, boolean][] = [
  ['Orbit', <svg width="20" height="20" viewBox="0 0 20 20" fill="none" stroke="#333"><ellipse cx="10" cy="10.500" rx="8.500" ry="3.800" strokeWidth="1.300" /><path d="M9 19V4.500H7L10.500 .5L14 4.500H12V19z" fill="#fff" stroke="#777" /><path d="M7 14Q11 14.500 14 13.800" strokeWidth="1.500" /><path d="M2 13.500l6-3v6z" fill="#222" stroke="none" /></svg>, true],
  ['Look at', <svg width="20" height="20" viewBox="0 0 20 20" fill="none" stroke={D} strokeWidth="1.400"><path d="M1 7.500H19V19H1zM2 5.500L6 2V5L15 1V5" /><path d="M5 10.500H15V15H5z" fill="#ccd3de" /></svg>, false],
  ['Pan', <svg width="20" height="20" viewBox="0 0 20 20" fill="#fff" stroke={D} strokeWidth="1.200" strokeLinejoin="round"><path d="M7 19Q5 15 1 11Q1 9 3 9.500L6 12L3.500 4.500Q4.500 2.500 6 4.500L8 9L7.500 2Q9 0 10 2L10.500 9L12.500 2Q14 .5 14.500 3L13.500 9.500L16.500 5Q18.500 4.500 18 7L15.500 14L14.500 19z" /></svg>, false],
  ['Zoom', <svg width="20" height="20" viewBox="0 0 20 20" fill="none" stroke={D}><circle cx="7" cy="9" r="5.500" fill="#d8ebea" strokeWidth="1.500" /><path d="M11 13L15.500 18" strokeWidth="3" /><path d="M14 4.500H19.500M16.800 2V7M14 9H19.500" strokeWidth="1.200" /></svg>, false],
  ['Zoom window', <svg width="20" height="20" viewBox="0 0 20 20" fill="none" stroke={D}><path d="M1 1H19V19H1z" strokeDasharray="2 2" stroke="#777" /><circle cx="10" cy="8" r="7" fill="#dcecea" strokeWidth="1.400" /><path d="M14 13L18.500 18" strokeWidth="3" stroke="#444" /></svg>, true],
  ['Display settings', <svg width="20" height="20" viewBox="0 0 20 20" fill="none" stroke="#555"><path d="M1 1.500H19V15H1z" fill="#e4e6ea" strokeWidth="1.400" /><path d="M3.500 4H16.500V12.500H3.500z" fill="#8db2e3" stroke="#4d73a8" /><path d="M7 15V18.500H13V15z" fill="#ccc" /></svg>, true],
  ['Grid and snaps', <svg width="20" height="20" viewBox="0 0 20 20" fill="#fff" stroke="#777"><path d="M1 1H19V19H1z" strokeWidth="1.600" stroke="#555" /><path d="M4.500 1V19M8 1V19M11.500 1V19M15 1V19M1 4.500H19M1 8H19M1 11.500H19M1 15H19" /></svg>, true],
  ['Viewports', <svg width="20" height="20" viewBox="0 0 20 20" fill="#a9c4ea" stroke="#44608c" strokeWidth="1.400"><path d="M1 2H19V18H1z" fill="#eef3fa" /><path d="M3 4H9V9H3zM11 4H17V9H11zM3 11H9V16H3zM11 11H17V16H11z" strokeWidth="1" /></svg>, true],
];

const K = '#5a5a5a';

export default function App() {
  return (
    <Shell>
      <Global />
      <TitleBar>
        <svg width="17" height="18" viewBox="0 0 17 18"><path d="M0 0h17v18H0z" fill="#fbdcc0" /><path d="M4 2H14V5H8V7.500H13V10.500H8V14H4z" fill="#dd7a1f" /><path d="M4 2L8 5V14H4z" fill="#9c4a0c" /><path d="M9 15.500h6" stroke="#e8954a" strokeWidth="2" /></svg>
        <AppTitle>Autodesk Fusion 360 (Education License)</AppTitle>
        <WindowControls>
          <WindowButton aria-label="Minimize"><svg width="12" height="12" viewBox="0 0 12 12"><path d="M0 5.500h11" stroke="#000" /></svg></WindowButton>
          <WindowButton aria-label="Restore"><svg width="12" height="12" viewBox="0 0 12 12" fill="none" stroke="#000"><path d="M.5 2.500h8v8h-8zM2.500 2V.5h8v8H9" /></svg></WindowButton>
          <WindowButton aria-label="Close window"><svg width="12" height="12" viewBox="0 0 12 12"><path d="M.5.5l11 11M11.500.5l-11 11" stroke="#000" /></svg></WindowButton>
        </WindowControls>
      </TitleBar>

      <Strip>
        <QuickAccess>
          <button aria-label="Data panel"><svg width="17" height="17" viewBox="0 0 17 17" fill={K}><path d="M0 0h5v5H0zM6 0h5v5H6zM12 0h5v5h-5zM0 6h5v5H0zM6 6h5v5H6zM12 6h5v5h-5zM0 12h5v5H0zM6 12h5v5H6zM12 12h5v5h-5z" /></svg></button>
          <SplitButton aria-label="File"><svg width="15" height="19" viewBox="0 0 15 19" fill={K}><path d="M0 0H10V5H15V19H0z" /><path d="M11 0L15 4H11z" /></svg><Caret color={K} w={8} /></SplitButton>
          <button aria-label="Save"><svg width="17" height="17" viewBox="0 0 17 17"><path d="M0 0H17V17H2L0 15z" fill="#8a8a8a" /><path d="M4 1.500h9v5H4zM4 10h9v7H4z" fill="#cacaca" /><path d="M10 2h2v4h-2zM6 12h3v5H6z" fill="#8a8a8a" /></svg></button>
          <History>
            <SplitButton aria-label="Undo"><svg width="15" height="15" viewBox="0 0 15 15" fill="none" stroke="#8a8a8a" strokeWidth="2.400"><path d="M2 6H7.500Q13 7 13.500 14" /><path d="M6.500 1L1.500 6L6.500 11" /></svg><Caret color="#8a8a8a" w={8} /></SplitButton>
            <SplitButton aria-label="Redo"><svg width="16" height="15" viewBox="0 0 16 15" fill="none" stroke="#8a8a8a" strokeWidth="2.400"><path d="M14 6H8Q2 7 1.500 14" /><path d="M9.500 1L14.500 6L9.500 11" /></svg><Caret color="#8a8a8a" w={8} /></SplitButton>
          </History>
        </QuickAccess>
        <DocTab>
          <DocTitle>
            <svg width="20" height="19" viewBox="0 0 20 19"><path d="M0 3L10 0L20 3V13L10 18.500L0 13z" fill="#666" /><path d="M0.500 3.500L10 6.500V18L0.500 13z" fill="#a8a8a8" /><path d="M0 3L10 0L20 3L10 6z" fill="#4e4e4e" /></svg>
            Halloween Evil Face v3
          </DocTitle>
          <button aria-label="Close document"><svg width="10" height="10" viewBox="0 0 10 10"><path d="M.5.5l9 9M9.500.5l-9 9" stroke="#777" strokeWidth="1.600" /></svg></button>
        </DocTab>
        <NewTab aria-label="New design"><svg width="15" height="15" viewBox="0 0 15 15"><path d="M7.500 0V15M0 7.500H15" stroke="#777" strokeWidth="3" /></svg></NewTab>
        <Utilities>
          <button aria-label="Comments"><svg width="20" height="18" viewBox="0 0 20 18"><path d="M0 0H20V13H17V18L12 13H0z" fill={K} /><path d="M3 3.500h14M3 6.500h14M3 9.500h10" stroke="#cacaca" /></svg></button>
          <button aria-label="Extensions"><svg width="20" height="20" viewBox="0 0 20 20"><circle cx="10" cy="10" r="9.500" fill={K} /><path d="M3.500 13Q3 6 8 6Q9 4 12 4M14 3.500L12 7.500M17 6.500L14 9M7.500 17Q7 13 11 12.500Q15 12.500 16 9.500" stroke="#cacaca" strokeWidth="2" fill="none" /></svg></button>
          <button aria-label="Job status"><svg width="20" height="20" viewBox="0 0 20 20"><circle cx="10" cy="10" r="9" fill="none" stroke={K} strokeWidth="1.500" /><circle cx="10" cy="10" r="7" fill={K} /><path d="M10 5V10.500H14.500" fill="none" stroke="#cacaca" strokeWidth="2" /></svg></button>
          <button aria-label="Notifications"><svg width="20" height="20" viewBox="0 0 20 20" fill={K}><path d="M10 1Q12 1 11.500 3Q15 4 15 9Q15 13 18 16H2Q5 13 5 9Q5 4 8.500 3Q8 1 10 1zM8 17h4q0 2-2 2t-2-2z" /></svg></button>
          <button aria-label="Help"><svg width="20" height="20" viewBox="0 0 20 20"><circle cx="10" cy="10" r="9.500" fill={K} /><path d="M6.500 7.500Q7 4.500 10 4.500Q13.500 4.500 13.500 7.500Q13.500 9 11.500 10Q10 11 10 12.500" fill="none" stroke="#cacaca" strokeWidth="2.200" /><path d="M8.800 14h2.400v2.400H8.800z" fill="#cacaca" /></svg></button>
          <Avatar>AB</Avatar>
        </Utilities>
      </Strip>

      <Ribbon>
        <Workspace>DESIGN <Caret /></Workspace>
        <RibbonMain>
          <Tabs>
            <Tab $active>SOLID</Tab>
            <Tab>SURFACE</Tab>
            <Tab>MESH</Tab>
            <Tab>SHEET METAL</Tab>
            <Tab>TOOLS</Tab>
          </Tabs>
          <Groups>
            {groups.map((g, i) => (
              <React.Fragment key={g.name}>
                {i > 0 && <Separator />}
                <Group $pad={g.pad} $width={g.width}>
                  <Tools>
                    {g.tools.map(([name, art]) => <Tool key={name} aria-label={name}>{art}</Tool>)}
                  </Tools>
                  <GroupLabel>{g.name} <Caret /></GroupLabel>
                </Group>
              </React.Fragment>
            ))}
          </Groups>
        </RibbonMain>
      </Ribbon>

      <Viewport>
        <LeftColumn>
          <div>
            <Panel>
              <svg width="12" height="8" viewBox="0 0 12 8"><path d="M6 0V8L0 4zM12 0V8L6 4z" fill="#333" /></svg>
              <PanelTitle>BROWSER</PanelTitle>
              <button aria-label="Collapse browser"><svg width="12" height="12" viewBox="0 0 12 12"><circle cx="6" cy="6" r="5.500" fill="#333" /><path d="M3 6h6" stroke="#fff" strokeWidth="1.600" /></svg></button>
              <Grip />
            </Panel>
            <Tree>
              <Node $root>
                <svg width="15" height="15" viewBox="0 0 15 15"><path d="M14 1V14H1z" fill="#8a8a8a" stroke="#333" strokeWidth="1.500" strokeLinejoin="round" /></svg>
                <RootChip>
                  <RootBar />
                  <Eye />
                  <RootName><AssemblyIcon />Halloween Evil Face v3</RootName>
                  <svg width="16" height="16" viewBox="0 0 16 16"><circle cx="8" cy="8" r="7" fill="#fff" stroke="#333" strokeWidth="1.500" /><circle cx="8" cy="8" r="2.500" fill="#333" /></svg>
                </RootChip>
              </Node>
              {nodes.map((n) => (
                <Node key={n.name}>
                  <Closed />
                  <Chip $bar={n.icon === 'component'}>
                    {n.eye === 'on' && <Eye />}
                    {n.eye === 'off' && <EyeOff />}
                    {n.icon === 'gear' && <Gear color="#999" />}
                    {n.icon === 'folder' && <Folder />}
                    {n.icon === 'component' && <ComponentIcon />}
                    <NodeName>{n.name}</NodeName>
                  </Chip>
                </Node>
              ))}
            </Tree>
          </div>
          <Panel>
            <svg width="12" height="8" viewBox="0 0 12 8" />
            <PanelTitle>COMMENTS</PanelTitle>
            <button aria-label="Expand comments"><svg width="12" height="12" viewBox="0 0 12 12"><circle cx="6" cy="6" r="5.500" fill="#333" /><path d="M3 6h6M6 3v6" stroke="#fff" strokeWidth="1.600" /></svg></button>
            <Grip />
          </Panel>
        </LeftColumn>
        <Centre>
          <ModelView />
          <NavBar>
            {navItems.map(([name, art, menu]) => (
              <NavButton key={name} aria-label={name}>{art}{menu && <Caret />}</NavButton>
            ))}
          </NavBar>
        </Centre>
        <RightColumn><ViewCube /></RightColumn>
      </Viewport>

      <TimelineBar>
        <Playback>
          {playback.map(([name, art]) => (
            <PlayButton key={name} aria-label={name}><svg width="15" height="19" viewBox="0 0 15 19" fill="#4c4c4c">{art}</svg></PlayButton>
          ))}
        </Playback>
        <Track>
          <Span $cols={7} $color="#e394e3" />
          <Span $cols={2} $color="#ff6371" />
          {steps.map(([name, art]) => <Step key={name} aria-label={name}>{art}</Step>)}
          <Rail>{Array.from({ length: 8 }, (_, i) => <RailSegment key={i} />)}</Rail>
          <Marker width="14" height="38" viewBox="0 0 14 38"><path d="M0 0H14V5L8.500 11V38H5.500V11L0 5z" fill="#666" /></Marker>
        </Track>
        <SettingsButton aria-label="Timeline settings"><Gear color="#8c8c8c" /></SettingsButton>
      </TimelineBar>
    </Shell>
  );
}
